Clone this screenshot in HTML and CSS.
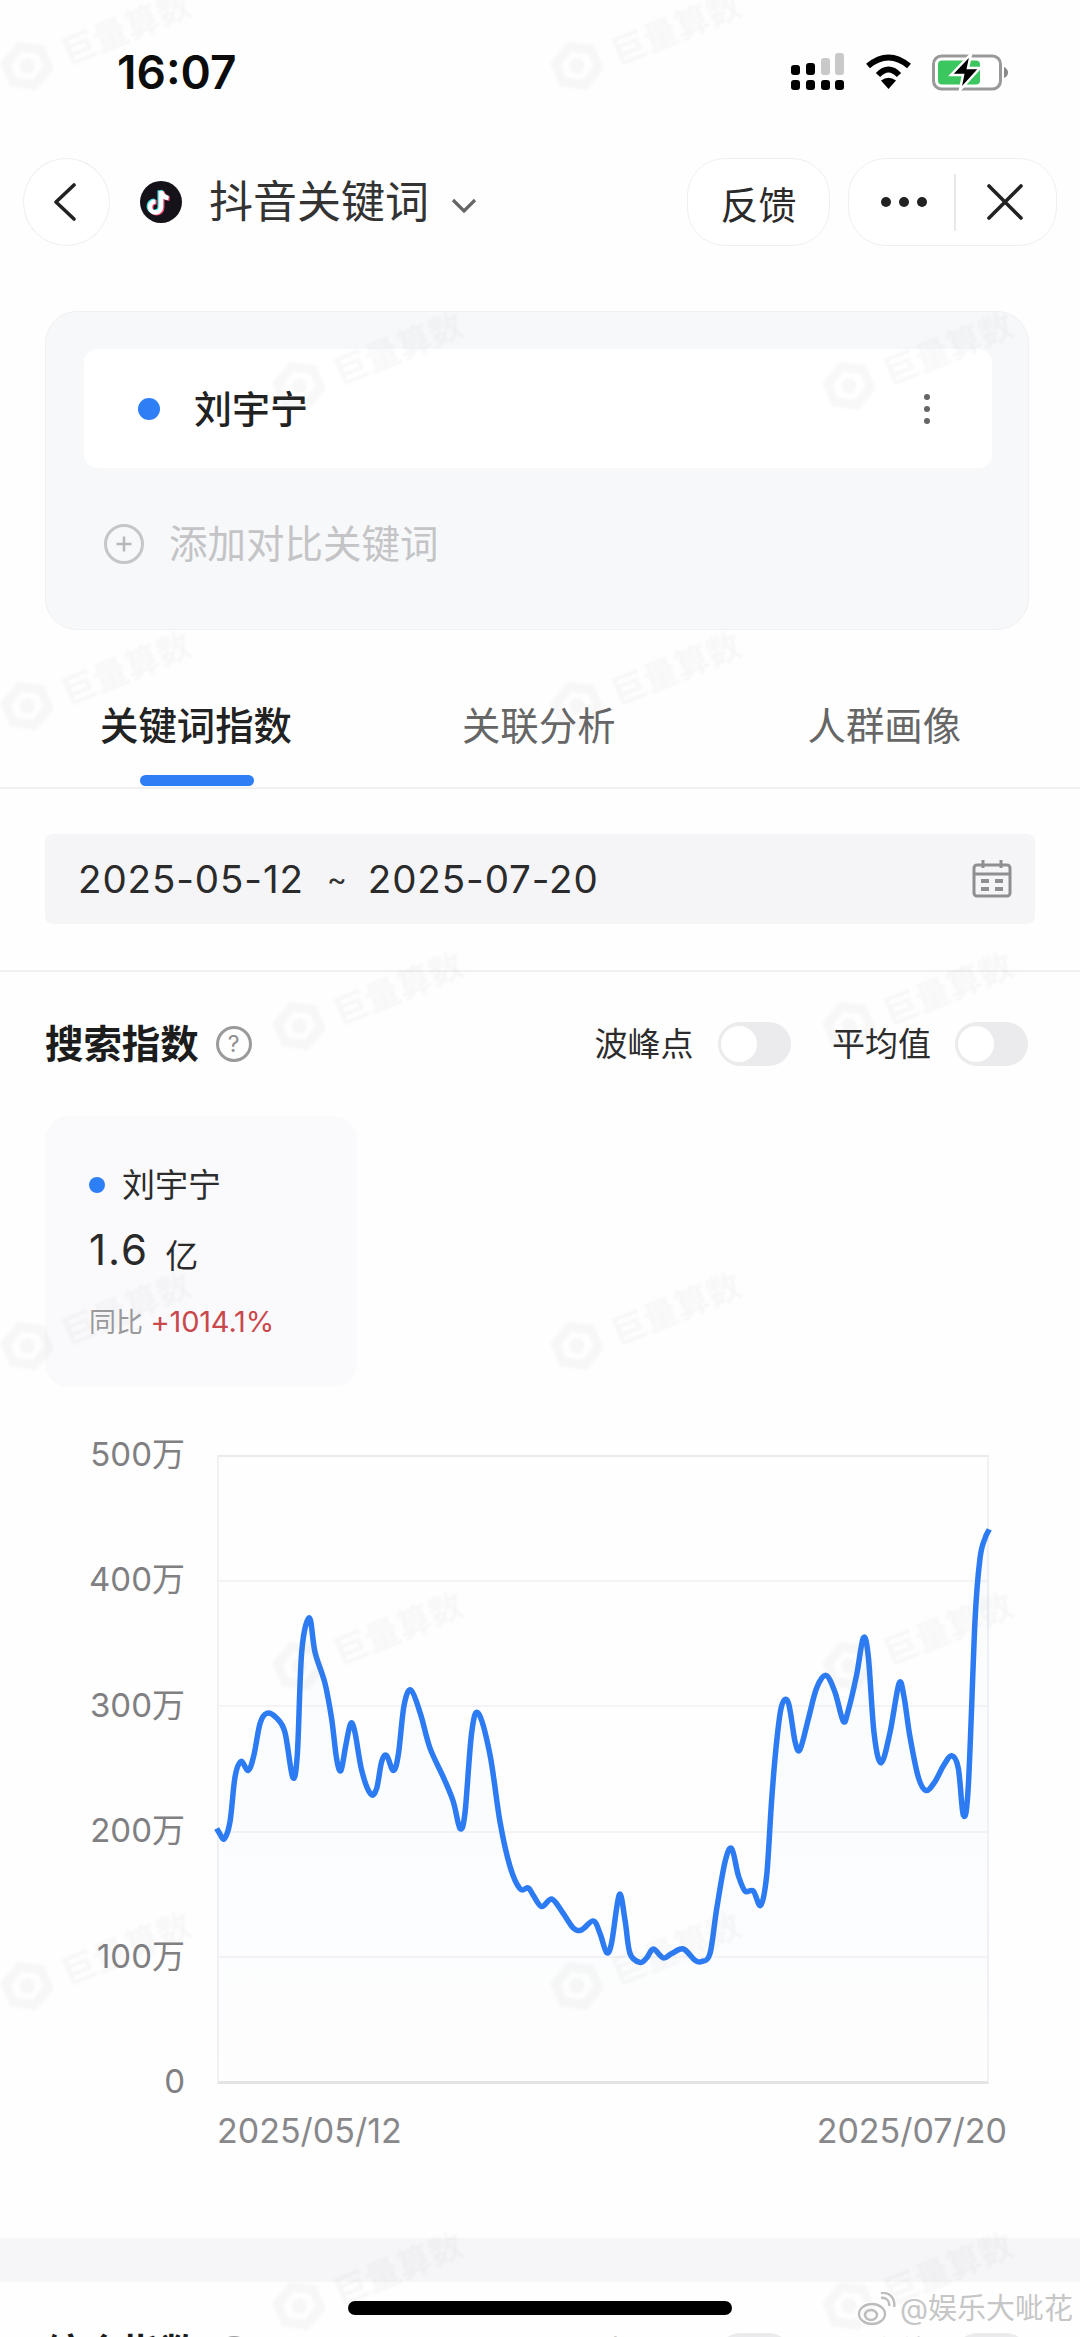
FILE: index.html
```html
<!DOCTYPE html>
<html lang="zh">
<head>
<meta charset="utf-8">
<title>抖音关键词</title>
<link rel="stylesheet" href="styles.css">
</head>
<body>
<div class="page">
  <header class="status">
    <span class="clock">16:07</span>
    <div class="status-icons">
      <svg width="54" height="38" viewBox="0 0 54 38">
        <rect x="0" y="12" width="9" height="10" rx="3"/><rect x="15" y="10" width="9" height="12" rx="3"/>
        <rect x="30" y="5" width="9" height="17" rx="3" fill="#c9c9c9"/><rect x="44" y="0" width="9" height="22" rx="3" fill="#c9c9c9"/>
        <rect x="0" y="27" width="9" height="10" rx="3"/><rect x="15" y="27" width="9" height="10" rx="3"/>
        <rect x="30" y="27" width="9" height="10" rx="3"/><rect x="44" y="27" width="9" height="10" rx="3"/>
      </svg>
      <svg width="47" height="36" viewBox="0 0 47 36">
        <path d="M3 12Q23.5-5 44 12" fill="none" stroke="#000" stroke-width="6"/>
        <path d="M13 21Q23.5 10 34 21" fill="none" stroke="#000" stroke-width="6"/>
        <path d="M16 26.5Q23.5 21 31 26.5L23.5 35Z"/>
      </svg>
      <svg width="76" height="37" viewBox="0 0 76 37">
        <rect x="1.5" y="2" width="67" height="33" rx="8" fill="#fff" stroke="#999" stroke-width="3"/>
        <rect x="6" y="6.5" width="42" height="24" rx="4" fill="#3cc65f"/>
        <path d="M72 13q4 2 4 5.500t-4 5.500z" fill="#888"/>
        <path d="M39 0 19 21H31L28 36 48 14H36Z" stroke="#fff" stroke-width="2.500"/>
      </svg>
    </div>
  </header>

  <nav class="nav">
    <button class="round-btn">
      <svg width="24" height="38" viewBox="0 0 24 38"><path d="M21 2 3 19l18 17" class="ic-dark"/></svg>
    </button>
    <svg class="brand" width="42" height="42" viewBox="0 0 42 42">
      <circle cx="21" cy="21" r="21" fill="#15121a"/>
      <g fill="none" stroke-width="4.600">
        <path d="M21 10v16a5.500 5.500 0 1 1-5.500-5.500M21 10c.8 4 3.500 6.500 7.500 7" stroke="#3be4e6" transform="translate(-1.200 -.8)"/>
        <path d="M21 10v16a5.500 5.500 0 1 1-5.500-5.500M21 10c.8 4 3.500 6.500 7.500 7" stroke="#f0446c" transform="translate(1.200 .8)"/>
        <path d="M21 10v16a5.500 5.500 0 1 1-5.500-5.500M21 10c.8 4 3.500 6.500 7.500 7" stroke="#fff"/>
      </g>
    </svg>
    <h1 class="nav-title">抖音关键词</h1>
    <svg class="chev" width="26" height="16" viewBox="0 0 26 16"><path d="M2 2l11 11L24 2" fill="none" stroke="#666" stroke-width="3.200"/></svg>
    <button class="feedback">反馈</button>
    <div class="capsule">
      <span class="capsule-dots"><i></i><i></i><i></i></span>
      <span class="capsule-sep"></span>
      <svg width="36" height="36" viewBox="0 0 36 36"><path d="M2 2l32 32M34 2 2 34" class="ic-dark"/></svg>
    </div>
  </nav>

  <section class="keyword-card">
    <div class="keyword-row">
      <span class="dot"></span>
      <span class="keyword-name">刘宇宁</span>
      <span class="kebab"><i></i><i></i><i></i></span>
    </div>
    <div class="add-row">
      <svg width="40" height="40" viewBox="0 0 40 40"><circle cx="20" cy="20" r="18.500" fill="none" stroke="#c6c6c8" stroke-width="3"/><path d="M12.500 20h15M20 12.500v15" stroke="#b8b8ba" stroke-width="2.500"/></svg>
      <span class="add-text">添加对比关键词</span>
    </div>
  </section>

  <div class="tabs">
    <span class="tab active">关键词指数</span>
    <span class="tab second">关联分析</span>
    <span class="tab third">人群画像</span>
  </div>

  <div class="date-box">
    <span class="date-text">2025-05-12</span>
    <span class="date-sep">~</span>
    <span class="date-text">2025-07-20</span>
    <svg class="cal" width="40" height="38" viewBox="0 0 40 38">
      <rect x="2" y="5" width="36" height="31" rx="3" fill="none" stroke="#8f8f93" stroke-width="3"/>
      <path d="M2 14h36M11 0v8M29 0v8" stroke="#8f8f93" stroke-width="3"/>
      <path d="M9 21h8M23 21h8M9 29h8M23 29h8" stroke="#8f8f93" stroke-width="4"/>
    </svg>
  </div>

  <section class="index-section">
    <div class="section-head">
      <h2 class="section-title">搜索指数</h2>
      <span class="help">?</span>
      <span class="switch-label first">波峰点</span><span class="switch"></span>
      <span class="switch-label">平均值</span><span class="switch"></span>
    </div>

    <div class="stat-card">
      <div class="stat-name"><span class="dot small"></span>刘宇宁</div>
      <div class="stat-value"><span class="num">1.6</span><span class="unit">亿</span></div>
      <div class="stat-yoy">同比 <span class="up">+1014.1%</span></div>
    </div>

    <div class="chart">
      <div class="axis">
        <span>500万</span><span>400万</span><span>300万</span><span>200万</span><span>100万</span><span>0</span>
      </div>
      <div class="plot">
        <div class="grid-row"></div><div class="grid-row"></div><div class="grid-row"></div><div class="grid-row"></div><div class="grid-row"></div>
        <svg id="trend" class="trend" viewBox="217 1455 772 628" preserveAspectRatio="none">
          <defs><linearGradient id="fade" x1="0" y1="0" x2="0" y2="1"><stop offset="0" stop-color="#2c7bf2" stop-opacity=".022"/><stop offset="1" stop-color="#2c7bf2" stop-opacity=".004"/></linearGradient></defs>
          <path id="trend-area" fill="url(#fade)"/>
          <path id="trend-line" fill="none" stroke="#2c7bf2" stroke-width="5.500" stroke-linejoin="round"/>
        </svg>
      </div>
    </div>
    <div class="x-axis"><span>2025/05/12</span><span>2025/07/20</span></div>
  </section>

  <div class="band"></div>

  <section class="next-section">
    <div class="section-head">
      <h2 class="section-title">综合指数</h2>
      <span class="help">?</span>
      <span class="switch-label first">波峰点</span><span class="switch"></span>
      <span class="switch-label">平均值</span><span class="switch"></span>
    </div>
  </section>

  <div class="wm-layer" aria-hidden="true">
    <div class="wm-row"><div class="wm"><svg class="wm-logo" width="60" height="60" viewBox="0 0 56 56"><path d="M28 4 50 16V40L28 52 6 40V16Z M28 14 14 22V34L28 42 42 34V22Z M28 21a7 7 0 1 0 .1 0Z" fill-rule="evenodd"/></svg><span>巨量算数</span></div><div class="wm"><svg class="wm-logo" width="60" height="60" viewBox="0 0 56 56"><path d="M28 4 50 16V40L28 52 6 40V16Z M28 14 14 22V34L28 42 42 34V22Z M28 21a7 7 0 1 0 .1 0Z" fill-rule="evenodd"/></svg><span>巨量算数</span></div></div>
    <div class="wm-row even"><div class="wm"><svg class="wm-logo" width="60" height="60" viewBox="0 0 56 56"><path d="M28 4 50 16V40L28 52 6 40V16Z M28 14 14 22V34L28 42 42 34V22Z M28 21a7 7 0 1 0 .1 0Z" fill-rule="evenodd"/></svg><span>巨量算数</span></div><div class="wm"><svg class="wm-logo" width="60" height="60" viewBox="0 0 56 56"><path d="M28 4 50 16V40L28 52 6 40V16Z M28 14 14 22V34L28 42 42 34V22Z M28 21a7 7 0 1 0 .1 0Z" fill-rule="evenodd"/></svg><span>巨量算数</span></div></div>
    <div class="wm-row"><div class="wm"><svg class="wm-logo" width="60" height="60" viewBox="0 0 56 56"><path d="M28 4 50 16V40L28 52 6 40V16Z M28 14 14 22V34L28 42 42 34V22Z M28 21a7 7 0 1 0 .1 0Z" fill-rule="evenodd"/></svg><span>巨量算数</span></div><div class="wm"><svg class="wm-logo" width="60" height="60" viewBox="0 0 56 56"><path d="M28 4 50 16V40L28 52 6 40V16Z M28 14 14 22V34L28 42 42 34V22Z M28 21a7 7 0 1 0 .1 0Z" fill-rule="evenodd"/></svg><span>巨量算数</span></div></div>
    <div class="wm-row even"><div class="wm"><svg class="wm-logo" width="60" height="60" viewBox="0 0 56 56"><path d="M28 4 50 16V40L28 52 6 40V16Z M28 14 14 22V34L28 42 42 34V22Z M28 21a7 7 0 1 0 .1 0Z" fill-rule="evenodd"/></svg><span>巨量算数</span></div><div class="wm"><svg class="wm-logo" width="60" height="60" viewBox="0 0 56 56"><path d="M28 4 50 16V40L28 52 6 40V16Z M28 14 14 22V34L28 42 42 34V22Z M28 21a7 7 0 1 0 .1 0Z" fill-rule="evenodd"/></svg><span>巨量算数</span></div></div>
    <div class="wm-row"><div class="wm"><svg class="wm-logo" width="60" height="60" viewBox="0 0 56 56"><path d="M28 4 50 16V40L28 52 6 40V16Z M28 14 14 22V34L28 42 42 34V22Z M28 21a7 7 0 1 0 .1 0Z" fill-rule="evenodd"/></svg><span>巨量算数</span></div><div class="wm"><svg class="wm-logo" width="60" height="60" viewBox="0 0 56 56"><path d="M28 4 50 16V40L28 52 6 40V16Z M28 14 14 22V34L28 42 42 34V22Z M28 21a7 7 0 1 0 .1 0Z" fill-rule="evenodd"/></svg><span>巨量算数</span></div></div>
    <div class="wm-row even"><div class="wm"><svg class="wm-logo" width="60" height="60" viewBox="0 0 56 56"><path d="M28 4 50 16V40L28 52 6 40V16Z M28 14 14 22V34L28 42 42 34V22Z M28 21a7 7 0 1 0 .1 0Z" fill-rule="evenodd"/></svg><span>巨量算数</span></div><div class="wm"><svg class="wm-logo" width="60" height="60" viewBox="0 0 56 56"><path d="M28 4 50 16V40L28 52 6 40V16Z M28 14 14 22V34L28 42 42 34V22Z M28 21a7 7 0 1 0 .1 0Z" fill-rule="evenodd"/></svg><span>巨量算数</span></div></div>
    <div class="wm-row"><div class="wm"><svg class="wm-logo" width="60" height="60" viewBox="0 0 56 56"><path d="M28 4 50 16V40L28 52 6 40V16Z M28 14 14 22V34L28 42 42 34V22Z M28 21a7 7 0 1 0 .1 0Z" fill-rule="evenodd"/></svg><span>巨量算数</span></div><div class="wm"><svg class="wm-logo" width="60" height="60" viewBox="0 0 56 56"><path d="M28 4 50 16V40L28 52 6 40V16Z M28 14 14 22V34L28 42 42 34V22Z M28 21a7 7 0 1 0 .1 0Z" fill-rule="evenodd"/></svg><span>巨量算数</span></div></div>
    <div class="wm-row even"><div class="wm"><svg class="wm-logo" width="60" height="60" viewBox="0 0 56 56"><path d="M28 4 50 16V40L28 52 6 40V16Z M28 14 14 22V34L28 42 42 34V22Z M28 21a7 7 0 1 0 .1 0Z" fill-rule="evenodd"/></svg><span>巨量算数</span></div><div class="wm"><svg class="wm-logo" width="60" height="60" viewBox="0 0 56 56"><path d="M28 4 50 16V40L28 52 6 40V16Z M28 14 14 22V34L28 42 42 34V22Z M28 21a7 7 0 1 0 .1 0Z" fill-rule="evenodd"/></svg><span>巨量算数</span></div></div>
  </div>

  <div class="home-bar"></div>

  <div class="credit">
    <svg width="40" height="34" viewBox="0 0 40 34">
      <g fill="none" stroke="#fff" stroke-width="5"><ellipse cx="15" cy="22" rx="13" ry="10"/><path d="M24 6c5-1 9 3 8 8M24 1c9-1 15 6 13 14"/></g>
      <g fill="none" stroke="#bdbdbd" stroke-width="2.400"><ellipse cx="15" cy="22" rx="13" ry="10"/><ellipse cx="14" cy="23" rx="6" ry="5"/><path d="M24 6c5-1 9 3 8 8M24 1c9-1 15 6 13 14"/></g>
    </svg>
    <span>@娱乐大呲花</span>
  </div>
</div>
<script src="chart.js"></script>
</body>
</html>
```

FILE: styles.css
```css
* { box-sizing: border-box; }
html, body { margin: 0; padding: 0; background: #fff; }
body { font-family: Inter, "Noto Sans CJK SC", sans-serif; color: #222; }
h1, h2 { margin: 0; font-weight: inherit; font-size: inherit; }
button { border: 0; background: none; padding: 0; font: inherit; color: inherit; }
.page { position: relative; width: 1080px; height: 2337px; overflow: hidden; background: #fefefe; }

.status { display: flex; justify-content: space-between; align-items: center; height: 158px; padding: 53px 72px 67px 117px; }
.clock { font-size: 46px; font-weight: 600; color: #0c0c0c; line-height: 38px; }
.status-icons { display: flex; align-items: center; gap: 20px; }
.status-icons svg { display: block; }

.ic-dark { fill: none; stroke: #222; stroke-width: 3.600; stroke-linecap: round; stroke-linejoin: round; }

.nav { display: flex; align-items: center; height: 88px; padding: 0 23px; }
.round-btn { display: flex; align-items: center; justify-content: center; width: 87px; height: 88px; padding-right: 4px; border: 1.500px solid #efeff0; border-radius: 50%; background: #fff; }
.brand { margin-left: 30px; flex: none; }
.nav-title { margin-left: 27px; font-size: 44px; line-height: 50px; color: #333; }
.chev { margin-left: 22px; margin-top: 8px; }
.feedback { margin-left: auto; width: 143px; height: 88px; border: 1.500px solid #efeff0; border-radius: 38px; background: #fff; font-size: 38px; color: #2a2a2a; }
.capsule { display: flex; align-items: center; width: 209px; height: 88px; margin-left: 18px; padding-left: 32px; border: 1.500px solid #efeff0; border-radius: 38px; background: #fff; }
.capsule-dots { display: flex; gap: 8px; }
.capsule-dots i { width: 10px; height: 10px; border-radius: 50%; background: #222; }
.capsule-sep { width: 1.500px; height: 57px; margin: 0 31px 0 27px; background: #e8e8ea; }

.keyword-card { height: 319px; margin: 65px 51px 0 45px; padding: 37px 36px 0 38px; border: 1.500px solid #f0f0f2; border-radius: 32px; background: #f7f8fa; }
.keyword-row { display: flex; align-items: center; height: 119px; padding: 0 62px 0 54px; border-radius: 14px; background: #fff; }
.dot { width: 22px; height: 22px; border-radius: 50%; background: #2e7ff6; flex: none; }
.dot.small { width: 16px; height: 16px; }
.keyword-name { margin-left: 34px; font-size: 38px; font-weight: 500; line-height: 44px; color: #222; }
.kebab { display: flex; flex-direction: column; gap: 6px; margin-left: auto; }
.kebab i { width: 6px; height: 6px; border-radius: 50%; background: #666; }
.add-row { display: flex; align-items: center; height: 40px; margin-top: 56px; padding-left: 20px; }
.add-text { margin-left: 25px; font-size: 38.500px; line-height: 44px; color: #c4c4c6; white-space: nowrap; }

.tabs { display: flex; height: 159px; padding: 77px 0 0 100px; border-bottom: 2px solid #f0f0f2; }
.tab { position: relative; height: 38px; font-size: 38.400px; line-height: 38px; color: #666; }
.tab.second { margin-left: 170px; }
.tab.third { margin-left: 192px; }
.tab.active { font-weight: 500; color: #222; }
.tab.active::after { content: ""; position: absolute; top: 68px; left: 40px; width: 114px; height: 11px; border-radius: 6px; background: #2e7ff6; }

.date-box { display: flex; align-items: center; height: 90px; margin: 45px 45px 46px; padding: 0 23px 0 33px; border-radius: 8px; background: #f5f5f7; }
.date-text { font-size: 38.500px; letter-spacing: .9px; color: #2b2b2b; }
.date-sep { margin: 0 21px 0 23px; font-size: 30px; color: #333; }
.cal { margin-left: auto; }

.index-section { border-top: 2px solid #f0f0f2; padding-top: 50px; }
.section-head { display: flex; align-items: center; height: 44px; padding: 0 52px 0 45px; }
.section-title { font-size: 38.400px; font-weight: 700; line-height: 44px; color: #1c1c1c; }
.help { display: flex; align-items: center; justify-content: center; width: 36px; height: 36px; margin-left: 17px; border: 3px solid #9a9a9c; border-radius: 50%; font-size: 23px; line-height: 1; color: #8f8f91; }
.switch-label { margin-left: 41.500px; margin-right: 24px; font-size: 33px; line-height: 44px; color: #2c2c2c; }
.switch-label.first { margin-left: auto; }
.switch { position: relative; width: 73px; height: 44px; border-radius: 22px; background: #ebebed; flex: none; }
.switch::after { content: ""; position: absolute; top: 4px; left: 3px; width: 36px; height: 36px; border-radius: 50%; background: #fff; }

.stat-card { width: 312px; height: 271px; margin: 50px 0 0 45px; padding: 53px 0 0 44px; border-radius: 24px; background: #fafafc; }
.stat-name { display: flex; align-items: center; gap: 17px; height: 32px; font-size: 33px; line-height: 32px; color: #2c2c2c; }
.stat-value { display: flex; align-items: baseline; height: 50px; margin-top: 24px; color: #2a2a2a; }
.num { font-size: 42px; line-height: 50px; letter-spacing: 2px; }
.unit { margin-left: 16px; font-size: 33px; transform: translateY(3px); }
.stat-yoy { margin-top: 31px; font-size: 27px; line-height: 32px; color: #9b9b9d; }
.up { font-size: 29px; letter-spacing: -.2px; color: #c9484c; }

.chart { display: flex; height: 629px; margin-top: 68px; padding-left: 85px; }
.axis { display: flex; flex-direction: column; justify-content: space-between; align-items: flex-end; width: 100px; margin: -21px 0 -17px; }
.axis span { height: 40px; font-size: 33px; line-height: 40px; color: #808083; }
.plot { position: relative; display: flex; flex-direction: column; width: 772px; margin-left: 32px; border: 2px solid #f2f2f5; border-top-color: #ebe9ec; border-bottom: 3px solid #e5e5e7; }
.grid-row { flex: 1; border-top: 2px solid #f4f3f6; }
.grid-row:first-child { border-top: 0; }
.trend { position: absolute; left: -2px; top: -2px; width: 772px; height: 628px; overflow: visible; }

.x-axis { display: flex; justify-content: space-between; margin-top: 27px; padding: 0 73px 0 217px; font-size: 34px; line-height: 40px; color: #88888b; }

.band { height: 44px; margin-top: 87px; background: #f6f6f8; }
.next-section { padding-top: 49px; }
.next-section .section-head { align-items: flex-start; }
.next-section .help { margin-top: 5px; }
.next-section .switch { margin-top: 2px; }

.wm-layer { position: absolute; top: -120px; left: -8px; width: 1088px; pointer-events: none; filter: blur(1px); }
.wm-row { display: flex; height: 320px; align-items: center; gap: 352px; }
.wm-row.even { padding-left: 272px; }
.wm { display: flex; align-items: center; gap: 8px; width: 198px; flex: none; transform: rotate(-22deg); font-size: 34px; font-weight: 700; color: rgba(120, 120, 135, .055); white-space: nowrap; }
.wm-logo { flex: none; fill: rgba(120, 120, 135, .055); }

.home-bar { position: absolute; left: 348px; top: 2301px; width: 384px; height: 14px; border-radius: 7px; background: #000; }

.credit { position: absolute; left: 857px; top: 2291px; display: flex; align-items: center; gap: 3px; font-size: 29px; line-height: 36px; color: #c6c6c6; text-shadow: 0 0 3px #fff, 0 0 3px #fff, 0 0 2px #fff; white-space: nowrap; }
```

FILE: chart.js
```js
// Trend data in page pixels, smoothed with a Catmull-Rom spline.
(function () {
  var left = [[110,915],[118,925],[133,938],[150,900],[165,800],[183,765],[205,785],[222,750],[240,680],[260,657],[290,668],[315,700],[338,800],[352,750],[365,520],[388,443],[405,520],[435,590],[455,670],[470,760],[483,785],[497,730],[512,680],[525,700],[545,785],[572,838],[590,825],[605,765],[620,752],[640,785],[655,750],[672,640],[693,605],[722,660],[750,735],[790,800],[820,855],[840,915],[855,880],[875,700],[895,657],[930,750],[960,900],[990,1000],[1020,1050],[1045,1048],[1060,1065],[1085,1090],[1115,1073],[1145,1100],[1180,1138],[1205,1142],[1240,1122],[1260,1150],[1280,1193],[1295,1170],[1318,1063],[1335,1120]];
  var right = [[90,1195],[120,1215],[140,1205],[160,1185],[190,1205],[215,1195],[250,1185],[285,1210],[305,1213],[330,1195],[350,1095],[375,990],[395,960],[415,1020],[435,1055],[460,1055],[482,1087],[500,1020],[515,850],[530,720],[545,640],[565,633],[585,720],[600,738],[625,670],[650,600],[678,572],[705,610],[730,675],[745,650],[770,570],[790,488],[805,530],[822,700],[843,768],[870,700],[897,590],[912,620],[930,710],[955,800],[978,830],[1005,810],[1030,775],[1055,752],[1075,780],[1090,885],[1105,820],[1125,450],[1140,310],[1155,265],[1168,245]];
  var pts = left.map(function (p) { return [180 + p[0] / 3, 1420 + p[1] / 2.24]; })
    .concat(right.map(function (p) { return [600 + p[0] / 3, 1420 + p[1] / 2.24]; }));
  var d = 'M' + pts[0][0].toFixed(1) + ' ' + pts[0][1].toFixed(1);
  for (var i = 0; i < pts.length - 1; i++) {
    var p0 = pts[Math.max(i - 1, 0)], p1 = pts[i], p2 = pts[i + 1], p3 = pts[Math.min(i + 2, pts.length - 1)];
    d += 'C' + (p1[0] + (p2[0] - p0[0]) / 6).toFixed(1) + ' ' + (p1[1] + (p2[1] - p0[1]) / 6).toFixed(1) +
      ' ' + (p2[0] - (p3[0] - p1[0]) / 6).toFixed(1) + ' ' + (p2[1] - (p3[1] - p1[1]) / 6).toFixed(1) +
      ' ' + p2[0].toFixed(1) + ' ' + p2[1].toFixed(1);
  }
  document.getElementById('trend-line').setAttribute('d', d);
  document.getElementById('trend-area').setAttribute('d', d + 'L989 2083L217 2083Z');
})();
```
